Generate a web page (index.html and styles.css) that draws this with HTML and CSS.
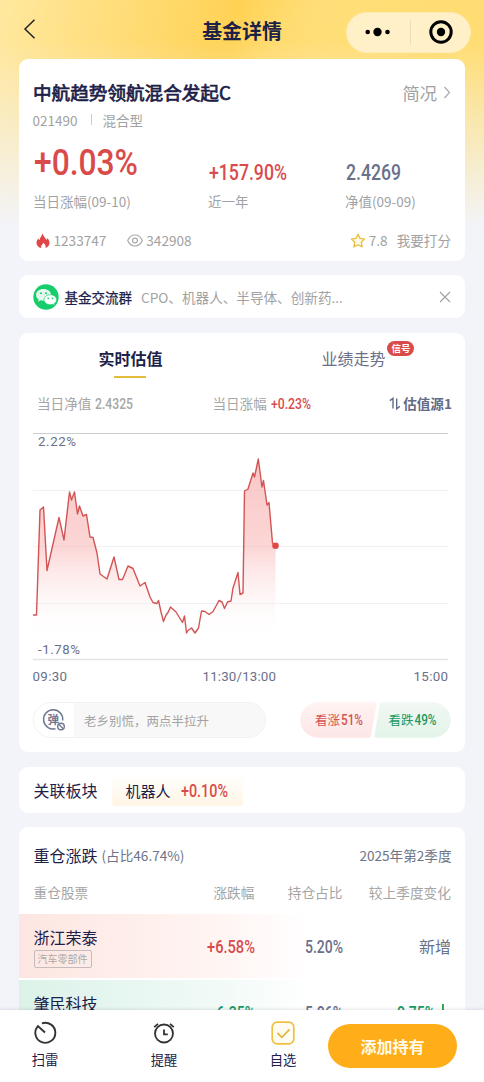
FILE: index.html
```html
<!DOCTYPE html>
<html lang="zh-CN">
<head>
<meta charset="utf-8">
<title>基金详情</title>
<link rel="stylesheet" href="styles.css">
</head>
<body>
<div class="page">
  <header class="nav">
    <svg class="back" width="14" height="22" viewBox="0 0 14 22"><path d="M11.5 1.800 2 11l9.500 9.200" fill="none" stroke="#222" stroke-width="1.500"/></svg>
    <h1>基金详情</h1>
    <div class="capsule">
      <svg width="26" height="10" viewBox="0 0 26 10"><circle cx="2.700" cy="5" r="2.300"/><circle cx="12.500" cy="5" r="4.200"/><circle cx="22.500" cy="5" r="2.300"/></svg>
      <i></i>
      <svg width="24" height="24" viewBox="0 0 24 24"><circle cx="12" cy="12" r="10.200" fill="none" stroke="#000" stroke-width="3"/><circle cx="12" cy="12" r="4.200"/></svg>
    </div>
  </header>

  <main>
    <section class="card fund">
      <div class="fund-head">
        <h2>中航趋势领航混合发起C</h2>
        <div class="brief">简况<svg width="8" height="13" viewBox="0 0 8 13"><path d="m1.500 1 5 5.500-5 5.500" fill="none" stroke="#aaa" stroke-width="1.200"/></svg></div>
      </div>
      <div class="fund-code"><span>021490</span><i></i><span>混合型</span></div>
      <div class="stats">
        <div class="stat main-stat">
          <svg class="num up" width="104" height="27"><text y="26" font-size="37.500" textLength="104" lengthAdjust="spacingAndGlyphs">+0.03%</text></svg>
          <span>当日涨幅(09-10)</span>
        </div>
        <div class="stat">
          <svg class="num up" width="78" height="16"><text y="15.700" font-size="22.500" textLength="78" lengthAdjust="spacingAndGlyphs">+157.90%</text></svg>
          <span>近一年</span>
        </div>
        <div class="stat">
          <svg class="num slate" width="55" height="16"><text y="15.700" font-size="22.500" textLength="55" lengthAdjust="spacingAndGlyphs">2.4269</text></svg>
          <span>净值(09-09)</span>
        </div>
      </div>
      <div class="meta">
        <svg class="flame" width="14" height="15" viewBox="0 0 14 15"><path d="M6.300.200c.5 2.800 3.300 4.100 3.800 6.600.8-.3 1.200-1 1.300-1.900 1.300 1.400 2.200 3.300 2.100 5.200-.1 2.500-1.800 4.300-4.100 4.800.6-1.600.2-3.500-2.200-5.200-.1 1.500-2.300 2.200-2.100 4.100 0 .5.100.8.300 1.100C2.500 14.400.500 12.600.500 9.900c0-1.900.9-3.200 1.800-4.400.3.700.7 1.300 1.400 1.500C3.600 4.300 6.300 3 6.300.200z" fill="#e24545"/></svg>
        <span>1233747</span>
        <svg class="eye" width="16" height="13" viewBox="0 0 16 13"><path d="M.7 6.500C2.200 2.900 4.700 1 8 1s5.800 1.900 7.300 5.500C13.800 10.100 11.300 12 8 12S2.200 10.100.7 6.500z" fill="none" stroke="#aaa" stroke-width="1.200"/><circle cx="8" cy="6.500" r="2.400" fill="none" stroke="#aaa" stroke-width="1.200"/></svg>
        <span>342908</span>
        <svg class="star" width="16" height="15" viewBox="0 0 16 15"><path d="m8 1.300 2 4.100 4.600.7-3.300 3.200.8 4.600L8 11.700l-4.100 2.200.8-4.600L1.400 6.100l4.600-.7z" fill="#fffbe6" stroke="#e8bd3d" stroke-width="1.300" stroke-linejoin="round"/></svg>
        <span>7.8</span><span class="rate">我要打分</span>
      </div>
    </section>

    <section class="card group">
      <svg width="26" height="26" viewBox="0 0 26 26"><circle cx="13" cy="13" r="12.700" fill="#17cd6b"/><path d="M10.500 5C6.300 5 3 7.600 3 10.900c0 1.800 1 3.400 2.600 4.500L5 17.700l2.600-1.400c.9.300 1.900.4 2.900.4 4.200 0 7.500-2.600 7.500-5.900S14.700 5 10.500 5z" fill="#e4f9ed"/><path d="M17.300 10.700c-3.500 0-6.300 2.200-6.300 5s2.800 5 6.300 5c.8 0 1.600-.1 2.300-.4l2.200 1.200-.6-2c1.500-.9 2.400-2.200 2.400-3.800 0-2.800-2.800-5-6.300-5z" fill="#fff" stroke="#17cd6b" stroke-width=".7"/><g fill="#17cd6b"><circle cx="8" cy="9.300" r="1"/><circle cx="13" cy="9.300" r="1"/><circle cx="15.200" cy="14.300" r=".9"/><circle cx="19.500" cy="14.300" r=".9"/></g></svg>
      <b>基金交流群</b>
      <span>CPO、机器人、半导体、创新药...</span>
      <svg class="close" width="12" height="12" viewBox="0 0 12 12"><path d="m1 1 10 10M11 1 1 11" stroke="#a0a0a0" stroke-width="1.100"/></svg>
    </section>

    <section class="card estimate">
      <div class="tabs">
        <div class="tab active">实时估值</div>
        <div class="tab">业绩走势<em>信号</em></div>
      </div>
      <div class="quote">
        <span>当日净值</span>
        <svg class="num gray" width="38" height="11"><text y="10.500" font-size="14.800" textLength="38" lengthAdjust="spacingAndGlyphs">2.4325</text></svg>
        <span class="change">当日涨幅</span>
        <svg class="num up" width="40" height="11"><text y="10.500" font-size="14.800" textLength="40" lengthAdjust="spacingAndGlyphs">+0.23%</text></svg>
        <svg class="swap" width="12" height="13" viewBox="0 0 12 13"><path d="M.8 3.600 4 1.400V11.500M7.700 1.500V11.800L10.800 9.400" fill="none" stroke="#626b85" stroke-width="1.400"/></svg>
        <b>估值源1</b>
      </div>
      <svg class="chart" width="418" height="256" viewBox="33 431 418 256">
        <defs><linearGradient id="area" x1="0" y1="459" x2="0" y2="634" gradientUnits="userSpaceOnUse"><stop offset="0" stop-color="#f6a8a8" stop-opacity=".65"/><stop offset=".5" stop-color="#f9b4b4" stop-opacity=".55"/><stop offset="1" stop-color="#fff" stop-opacity=".1"/></linearGradient></defs>
        <path d="M33 433.500h415" stroke="#c9ced2" stroke-width="1.200"/>
        <path d="M33 490.500h415M33 546.500h415M33 603.500h415" stroke="#f0f1f3"/>
        <path d="M33 659.500h415" stroke="#e2e4e7" stroke-width="1.300"/>
        <path fill="url(#area)" d="M33 634V615H36.500L40 510 43.500 507 47 570.500 59 517.500 64 540 69.500 492 71.500 500 74.500 492 77.500 514 79.500 506 83 516 86.500 514.500 90 537 93 537.500 97 553 100 574 107 579 114 557 119 579.500H122.500L128 566 133 568.500 140 586 145 582.500 150 597 153 602.500 157 603.500 158.500 600.500 161 612 163.500 621.500 166 615 168 612.500 170.500 607 176 612 182.500 622.500 184.500 616 186.500 633 188 630.500 191.500 628 195 633 198.500 628 201.500 611 205 611.500 209 614.500 213 611.500 219 600.500 222 602 224.500 608.500 227.500 602 231 601 233 588 238 572.500 240 594.500 243 593 244.500 491 248 489 253 473 254.500 477 258.300 459 262 487 263.500 480.500 267 505 269 502.500 272.500 543 275.500 545.500V634Z"/>
        <path fill="none" stroke="#d35454" stroke-width="1.400" stroke-linejoin="round" d="M33 615H36.500L40 510 43.500 507 47 570.500 59 517.500 64 540 69.500 492 71.500 500 74.500 492 77.500 514 79.500 506 83 516 86.500 514.500 90 537 93 537.500 97 553 100 574 107 579 114 557 119 579.500H122.500L128 566 133 568.500 140 586 145 582.500 150 597 153 602.500 157 603.500 158.500 600.500 161 612 163.500 621.500 166 615 168 612.500 170.500 607 176 612 182.500 622.500 184.500 616 186.500 633 188 630.500 191.500 628 195 633 198.500 628 201.500 611 205 611.500 209 614.500 213 611.500 219 600.500 222 602 224.500 608.500 227.500 602 231 601 233 588 238 572.500 240 594.500 243 593 244.500 491 248 489 253 473 254.500 477 258.300 459 262 487 263.500 480.500 267 505 269 502.500 272.500 543 275.500 545.500"/>
        <circle cx="275.500" cy="545.700" r="3.300" fill="#e04848"/>
        <g class="axis">
          <text x="38" y="446" textLength="38">2.22%</text>
          <text x="38" y="654" textLength="42">-1.78%</text>
          <text x="32.500" y="680.500" textLength="34.500">09:30</text>
          <text x="202.500" y="680.500" textLength="73.500">11:30/13:00</text>
          <text x="413.500" y="680.500" textLength="34.500">15:00</text>
        </g>
      </svg>
      <div class="mood">
        <div class="comment">
          <div class="bullet"><svg width="24" height="24" viewBox="0 0 24 24"><path d="M20.700 12.500A9.600 9.600 0 1 0 13.500 20.700" fill="none" stroke="#707891" stroke-width="1.500"/><text x="5.500" y="15.500" font-size="11.500" font-weight="700" fill="#707891">弹</text><circle cx="19" cy="18.500" r="3.300" fill="#fff" stroke="#707891" stroke-width="1.400"/><path d="m16.800 16.300 4.400 4.400" stroke="#707891" stroke-width="1.300"/></svg></div>
          <span>老乡别慌，两点半拉升</span>
        </div>
        <div class="votes">
          <svg width="151" height="36" viewBox="0 0 151 36">
            <defs><linearGradient id="bull" x1="0" y1="0" x2="0" y2="1"><stop offset="0" stop-color="#fff3f2"/><stop offset="1" stop-color="#fde6e6"/></linearGradient><linearGradient id="bear" x1="0" y1="0" x2="0" y2="1"><stop offset="0" stop-color="#f1f8f3"/><stop offset="1" stop-color="#e3f4e8"/></linearGradient></defs>
            <path d="M18 .3H75q2 0 1.500 2L71 33.500q-.5 2.200-2.500 2.200H18A17.700 17.700 0 0 1 18 .3z" fill="url(#bull)"/>
            <path d="M82.500.3H133A17.700 17.700 0 0 1 133 35.700H76.500q-2.500 0-2-2.500L79.700 2.500q.5-2.200 2.800-2.200z" fill="url(#bear)"/>
            <text class="vote up-text" x="15" y="23.300">看涨</text>
            <text class="vote down-text" x="88.500" y="23.300">看跌</text>
            <text class="vote-num up-text" x="41" y="23" textLength="22" lengthAdjust="spacingAndGlyphs">51%</text>
            <text class="vote-num down-text" x="114.500" y="23" textLength="22" lengthAdjust="spacingAndGlyphs">49%</text>
          </svg>
        </div>
      </div>
    </section>

    <section class="card sector">
      <span>关联板块</span>
      <div class="chip">机器人<svg class="num up" width="47" height="13"><text y="12.500" font-size="18" textLength="47" lengthAdjust="spacingAndGlyphs">+0.10%</text></svg></div>
    </section>

    <section class="card holdings">
      <div class="hold-head"><span class="big">重仓涨跌</span><span>(占比46.74%)</span><span class="season">2025年第2季度</span></div>
      <div class="cols labels"><span>重仓股票</span><span>涨跌幅</span><span>持仓占比</span><span>较上季度变化</span></div>
      <div class="cols stock rise">
        <div class="name">浙江荣泰<small>汽车零部件</small></div>
        <div><svg class="num up" width="48" height="13"><text y="12.500" font-size="17.500" textLength="48" lengthAdjust="spacingAndGlyphs">+6.58%</text></svg></div>
        <div><svg class="num slate" width="38" height="13"><text y="12.500" font-size="17.500" textLength="38" lengthAdjust="spacingAndGlyphs">5.20%</text></svg></div>
        <div class="new">新增</div>
      </div>
      <div class="cols stock fall">
        <div class="name">肇民科技</div>
        <div><svg class="num down" width="43" height="13"><text y="12.500" font-size="17.500" textLength="43" lengthAdjust="spacingAndGlyphs">-6.35%</text></svg></div>
        <div><svg class="num slate" width="38" height="13"><text y="12.500" font-size="17.500" textLength="38" lengthAdjust="spacingAndGlyphs">5.06%</text></svg></div>
        <div><svg class="num down" width="38" height="13"><text y="12.500" font-size="17.500" textLength="38" lengthAdjust="spacingAndGlyphs">0.75%</text></svg><svg class="arrow" width="14" height="17" viewBox="0 0 14 17"><path d="M6 0v15M2 11l4 4 4-4" fill="none" stroke="#159a35" stroke-width="1.700"/></svg></div>
      </div>
    </section>
  </main>

  <footer class="bar">
    <div class="item">
      <svg width="24" height="24" viewBox="0 0 24 24"><path d="M8.900 2.400A10 10 0 1 1 4.900 5.100L12 11.500" fill="none" stroke="#333" stroke-width="1.900"/></svg>
      <span>扫雷</span>
    </div>
    <div class="item">
      <svg width="24" height="24" viewBox="0 0 24 24"><g fill="none" stroke="#333" stroke-width="1.800"><circle cx="12" cy="12.500" r="9"/><path d="M12 8.500V13.300H15.800M2.200 6.200 6 2.800M21.800 6.200 18 2.800"/></g></svg>
      <span>提醒</span>
    </div>
    <div class="item">
      <svg width="24" height="24" viewBox="0 0 24 24"><rect x="1.200" y="1.200" width="21.600" height="21.600" rx="5" fill="#fffdf2" stroke="#eec044" stroke-width="1.700"/><path d="m6.500 12 4.300 4.300 7.800-8" fill="none" stroke="#e2b64a" stroke-width="1.800"/></svg>
      <span>自选</span>
    </div>
    <button>添加持有</button>
  </footer>
</div>
</body>
</html>
```
FILE: styles.css
```css
* { box-sizing: border-box; margin: 0; padding: 0; }
body { font-family: "Noto Sans CJK SC", sans-serif; color: #1d2148; background: #f3f4fa; }
svg { display: block; flex: none; }
.page {
  height: 1082px; overflow: hidden; display: flex; flex-direction: column;
  background:
    linear-gradient(to bottom, rgba(243,244,250,0) 0, rgba(243,244,250,0) 40px, rgba(243,244,250,.55) 140px, #f3f4fa 228px) 0 0 / 100% 230px no-repeat,
    radial-gradient(circle at 420px 150px, rgba(255,226,130,.4) 0 180px, transparent 230px) 0 0 / 100% 230px no-repeat,
    linear-gradient(100deg, #ffe89f 0, #ffd254 46%, #ffdc72 62%, #ffd964 100%) 0 0 / 100% 230px no-repeat,
    #f3f4fa;
}
.nav { height: 59px; flex: none; display: grid; grid-template-columns: 138px 1fr 138px; align-items: center; padding: 5px 0 0; }
.back { margin: 0 0 6px 23px; }
.nav h1 { font-size: 19.900px; font-weight: 700; text-align: center; line-height: 28px; padding-bottom: 3px; }
.capsule { width: 125px; height: 41px; border-radius: 21px; background: #fff0c8; display: flex; align-items: center; justify-content: space-between; padding: 0 17px 0 18px; border: 1px solid #ffebb5; }
.capsule i { width: 1px; height: 25px; background: #eaddb7; }
main { flex: 1; min-height: 0; overflow: hidden; padding: 0 19px; display: flex; flex-direction: column; }
.card { background: #fff; border-radius: 9px; flex: none; }
.num { overflow: visible; font-family: Roboto, sans-serif; font-weight: 500; }
.up { fill: #d94b4b; }
.down { fill: #159a66; }
.slate { fill: #69718a; }
.gray { fill: #a6a6a6; }

.fund { height: 202px; padding: 19px 14px 0 14.500px; color: #a2a2a2; font-size: 13.500px; }
.fund-head { display: flex; justify-content: space-between; align-items: center; height: 28px; }
.fund-head h2 { font-size: 18.600px; line-height: 28px; color: #1d2148; font-weight: 400; -webkit-text-stroke: .7px #1d2148; margin-left: -.5px; }
.brief { display: flex; align-items: center; gap: 6px; font-size: 17.300px; }
.fund-code { height: 27px; display: flex; align-items: center; margin-left: -1px; }
.fund-code i { width: 1px; height: 11px; background: #ccc; margin: 0 10px 0 14px; }
.stats { height: 79px; display: grid; grid-template-columns: 175px 137px 1fr; align-items: end; }
.stat { display: flex; flex-direction: column; gap: 11px; line-height: 20px; padding-bottom: 1px; }
.stat span { margin-left: -.5px; }
.main-stat { gap: 15px; }
.meta { display: flex; align-items: center; height: 24px; margin-top: 16px; font-size: 13.600px; }
.flame { margin: 0 4px 0 2px; }
.eye { margin: 0 3px 0 21px; }
.star { margin: 0 3px 0 auto; }
.rate { margin-left: 9px; }

.group { height: 43px; margin-top: 14px; padding: 0 14px; display: flex; align-items: center; font-size: 13.500px; }
.group b { font-weight: 400; -webkit-text-stroke: .25px #1d2148; margin: 0 9px 0 5.500px; }
.group span { color: #a2a2a2; font-size: 13.600px; }
.close { margin-left: auto; }

.estimate { height: 419px; margin-top: 15px; padding-left: 14px; }
.tabs { height: 55px; display: grid; grid-template-columns: 195px 251px; padding-top: 11px; }
.tab { position: relative; justify-self: center; font-size: 16px; line-height: 28px; height: 33px; color: #697089; }
.active { color: #1d2148; font-weight: 700; }
.active::after { content: ""; display: block; width: 32px; height: 1.500px; margin: 4px auto 0; background: #e3bc3c; }
.tab em { position: absolute; left: 66px; top: -3px; width: 27px; height: 15px; border-radius: 8px; background: #d94a4a; color: #fff; font: 700 9.500px/15px "Noto Sans CJK SC", sans-serif; text-align: center; }
.quote { height: 30px; display: flex; align-items: center; padding: 0 13px 0 4px; font-size: 13.600px; color: #a6a6a6; }
.quote .num { margin-left: 4px; }
.quote .change { margin-left: 79px; }
.quote .swap { margin-left: auto; }
.quote b { color: #626b85; margin-left: 2px; }
.chart { margin-top: 13px; }
.axis { font: 13.300px Roboto, sans-serif; fill: #697089; }
.mood { display: flex; justify-content: space-between; margin-top: 15px; padding-right: 14px; }
.comment { width: 233px; height: 36px; border-radius: 18px; border: 1px solid #f2f2f2; background: #f8f8f8; display: flex; align-items: center; gap: 10px; font-size: 12.500px; color: #a3a3a3; overflow: hidden; }
.bullet { width: 40px; height: 34px; background: #fff; padding: 5px 0 0 8px; }
.vote { font-size: 12.500px; font-weight: 400; stroke: currentColor; stroke-width: 0; }
.vote-num { font: 500 15.500px Roboto, sans-serif; }
.up-text { fill: #d35353; }
.down-text { fill: #22985f; }

.sector { height: 46px; margin-top: 15px; padding: 0 14.500px; display: flex; align-items: center; gap: 14px; font-size: 16px; }
.chip { height: 31px; width: 131px; border-radius: 4px; background: linear-gradient(#fff, #fff5e4); display: flex; align-items: center; padding-left: 14px; gap: 10px; font-size: 15px; }

.holdings { height: 300px; margin-top: 14px; }
.hold-head { height: 56px; display: flex; align-items: center; padding: 0 13.500px 0 14.500px; gap: 4px; color: #6d7488; font-size: 13.600px; }
.hold-head .big { font-size: 16px; color: #1d2148; }
.season { margin-left: auto; }
.cols { display: grid; grid-template-columns: 112px 109px 88px 1fr; padding: 0 14px 0 14.500px; align-items: center; }
.cols > :not(:first-child) { justify-self: end; }
.labels { height: 31px; padding-bottom: 14px; font-size: 13.700px; color: #a5a5a5; line-height: 16px; }
.stock { height: 64px; margin-bottom: 2px; }
.rise { background: linear-gradient(90deg, #fde6e1 0, #fff5f3 45%, #fff 65%); }
.fall { background: linear-gradient(90deg, #dcf2e9 0, #f1faf7 45%, #fff 65%); }
.name { align-self: start; font-size: 16px; line-height: 24px; padding-top: 11px; display: flex; flex-direction: column; align-items: flex-start; }
.name small { font-size: 10px; line-height: 16px; height: 18px; margin-top: 1px; color: #aaa; border: 1px solid #c4bcbc; border-radius: 2px; padding: 0 3px; }
.new { font-size: 16px; color: #69718a; }
.stock > div:last-child { display: flex; align-items: center; gap: 2px; }

.bar { height: 72px; flex: none; background: #fff; box-shadow: 0 -1px 3px rgba(40,40,70,.12); display: flex; position: relative; padding-left: 31px; }
.item { width: 28px; margin-right: 91px; padding-top: 11px; display: flex; flex-direction: column; align-items: center; font-size: 13.300px; line-height: 20px; gap: 5px; white-space: nowrap; }
.item:nth-child(3) { margin-right: 31px; }
.bar button { width: 129px; height: 44px; margin-top: 14px; border: 0; border-radius: 22px; background: #ffae19; color: #fffbea; font: 700 16px "Noto Sans CJK SC", sans-serif; }
```
